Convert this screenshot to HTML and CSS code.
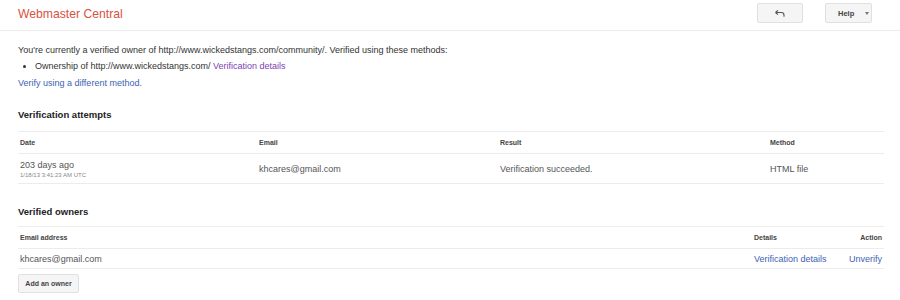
FILE: index.html
```html
<!DOCTYPE html>
<html>
<head>
<meta charset="utf-8">
<link rel="stylesheet" href="styles.css">
</head>
<body>
<div class="header">
  <div class="title">Webmaster Central</div>
  <button class="btn back-btn" aria-label="Back">
    <svg width="10" height="7" viewBox="0 0 10 7"><path d="M0.5 2.5 L3 0.3 M0.5 2.5 L3 4.7 M0.5 2.5 H6.5 Q9 2.5 9 5 V6.8" fill="none" stroke="#555" stroke-width="1.1"/></svg>
  </button>
  <button class="btn help-btn">Help <span class="caret"></span></button>
</div>
<div class="content">
  <p class="intro">You're currently a verified owner of http://www.wickedstangs.com/community/. Verified using these methods:</p>
  <ul class="methods">
    <li>Ownership of http://www.wickedstangs.com/ <a class="visited" href="#">Verification details</a></li>
  </ul>
  <p class="alt"><a href="#">Verify using a different method.</a></p>

  <h2 class="section">Verification attempts</h2>
  <table class="grid attempts">
    <thead>
      <tr><th class="c1">Date</th><th class="c2">Email</th><th class="c3">Result</th><th>Method</th></tr>
    </thead>
    <tbody>
      <tr>
        <td><div>203 days ago</div><div class="small">1/18/13 3:41:23 AM UTC</div></td>
        <td>khcares@gmail.com</td>
        <td>Verification succeeded.</td>
        <td><span class="plain">HTML file</span></td>
      </tr>
    </tbody>
  </table>

  <h2 class="section owners-title">Verified owners</h2>
  <table class="grid owners">
    <thead>
      <tr><th>Email address</th><th class="d">Details</th><th class="a">Action</th></tr>
    </thead>
    <tbody>
      <tr><td>khcares@gmail.com</td><td class="d"><a href="#">Verification details</a></td><td class="a"><a href="#">Unverify</a></td></tr>
    </tbody>
  </table>
  <button class="btn add-btn">Add an owner</button>
</div>
</body>
</html>
```
FILE: styles.css
```css
html, body {
  margin: 0;
  padding: 0;
  background: #fff;
}
body {
  font-family: "Liberation Sans", Arial, sans-serif;
  color: #333;
  font-size: 9px;
}
a {
  color: #3d64b4;
  text-decoration: none;
}
a.visited {
  color: #7b3fb3;
}
.header {
  display: flex;
  align-items: center;
  height: 31px;
  border-bottom: 1px solid #ececec;
  padding: 0 28px 4px 18px;
  box-sizing: border-box;
}
.title {
  color: #d9523f;
  font-size: 12.2px;
  margin-top: 2px;
}
.btn {
  font-family: "Liberation Sans", Arial, sans-serif;
  background: #f5f5f5;
  border: 1px solid #e0e0e0;
  border-radius: 2px;
  color: #444;
  font-weight: bold;
  font-size: 7.5px;
  padding: 0;
  display: flex;
  align-items: center;
  justify-content: center;
  box-sizing: border-box;
}
.back-btn {
  margin-left: auto;
  width: 46px;
  height: 20px;
}
.help-btn {
  margin-left: 22px;
  width: 47px;
  height: 20px;
  justify-content: flex-start;
  padding-left: 12px;
}
.caret {
  display: inline-block;
  width: 0;
  height: 0;
  border-left: 2.5px solid transparent;
  border-right: 2.5px solid transparent;
  border-top: 3px solid #777;
  margin-left: 11px;
}
.content {
  padding: 0 16px 0 18px;
}
.intro {
  margin: 14px 0 0;
  line-height: 11px;
  color: #333;
}
.methods {
  margin: 5px 0 0;
  padding-left: 17px;
  line-height: 11px;
}
.alt {
  margin: 6px 0 0;
  line-height: 11px;
}
.section {
  font-size: 9.5px;
  font-weight: bold;
  color: #222;
  margin: 20px 0 0;
  line-height: 12px;
}
.owners-title {
  margin-top: 22px;
}
.grid {
  width: 866px;
  border-collapse: collapse;
  margin-top: 10px;
}
.grid th {
  text-align: left;
  font-size: 7px;
  font-weight: bold;
  color: #444;
  height: 21px;
  padding: 0 0 0 2px;
  border-top: 1px solid #ececec;
  border-bottom: 1px solid #ececec;
  vertical-align: middle;
}
.grid td {
  padding: 0 0 0 2px;
  border-bottom: 1px solid #ececec;
  vertical-align: middle;
  font-size: 9px;
  color: #555;
}
.plain {
  color: #555;
}
.attempts td {
  height: 29px;
}
.attempts .c1 { width: 237px; }
.attempts .c2 { width: 239px; }
.attempts .c3 { width: 268px; }
.small {
  font-size: 6px;
  color: #888;
  margin-top: 2px;
}
.owners {
  margin-top: 8px;
}
.owners td {
  height: 19px;
}
.owners .d {
  width: 93px;
}
.owners .a {
  width: 31px;
  text-align: right;
  padding-right: 2px;
}
.add-btn {
  margin-top: 5px;
  width: 61px;
  height: 19px;
  font-size: 7px;
}
```
